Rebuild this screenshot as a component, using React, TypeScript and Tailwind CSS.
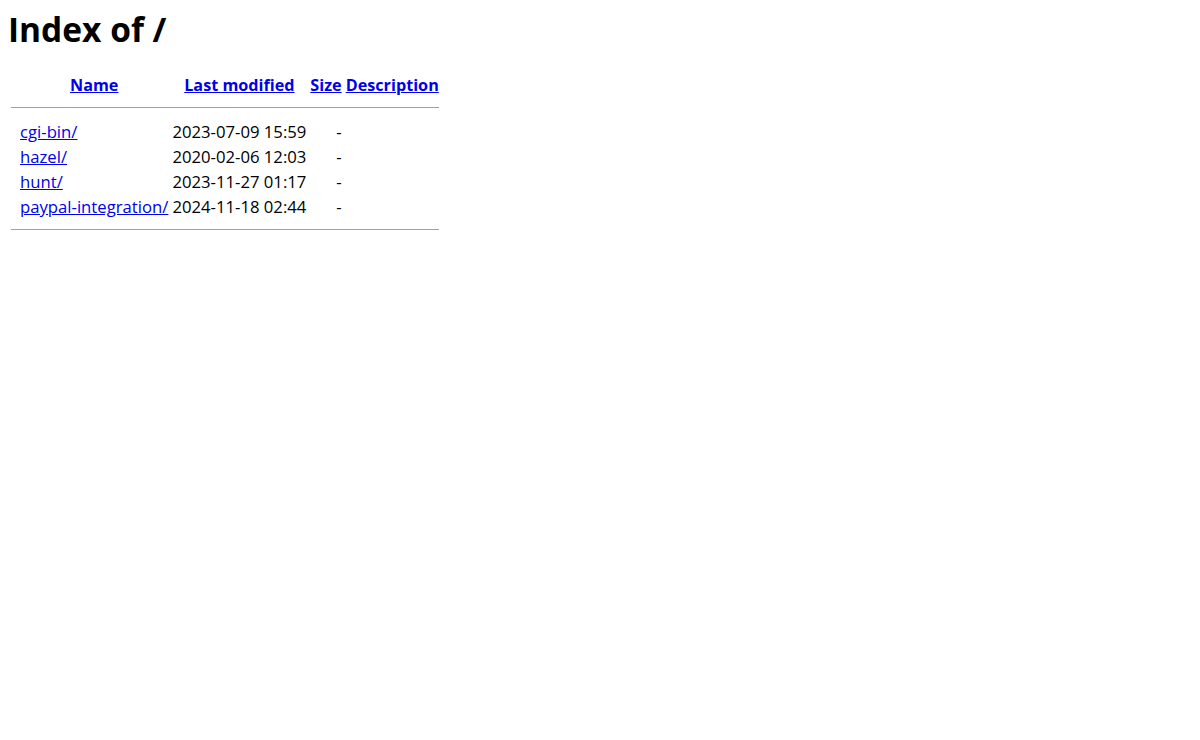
const ROWS = [
  { name: 'cgi-bin/', date: '2023-07-09 15:59' },
  { name: 'hazel/', date: '2020-02-06 12:03' },
  { name: 'hunt/', date: '2023-11-27 01:17' },
  { name: 'paypal-integration/', date: '2024-11-18 02:44' },
]

export default function App() {
  return (
    <div className="min-h-[740px] bg-white px-2 text-black text-[16.7px] font-['Open_Sans','Noto_Sans',sans-serif]">
      <h1 className="m-0 pt-[8px] pb-[21px] text-[33.5px] font-bold leading-[42px]">Index of /</h1>
      <table className="border-separate border-spacing-[2px] leading-[21px]">
        <tbody>
          <tr className="text-[16.2px]">
            <th className="w-[7px] p-px"></th>
            <th className="px-px pt-[2px] pb-0 text-center">
              <a href="#" className="text-[#0000ee] underline">Name</a>
            </th>
            <th className="px-px pt-[2px] pb-0 text-center">
              <a href="#" className="text-[#0000ee] underline">Last modified</a>
            </th>
            <th className="px-px pt-[2px] pb-0 text-center">
              <a href="#" className="text-[#0000ee] underline">Size</a>
            </th>
            <th className="px-px pt-[2px] pb-0 text-center">
              <a href="#" className="text-[#0000ee] underline">Description</a>
            </th>
          </tr>
          <tr>
            <th colSpan={5} className="p-px">
              <hr className="mt-2 mb-[9px] border-t border-[#a0a0a0]" />
            </th>
          </tr>
          {ROWS.map((r) => (
            <tr key={r.name}>
              <td className="p-px"></td>
              <td className="p-px">
                <a href="#" className="text-[#0000ee] underline">{r.name}</a>
              </td>
              <td className="p-px text-right">{r.date}</td>
              <td className="p-px text-right">-</td>
              <td className="p-px">&nbsp;</td>
            </tr>
          ))}
          <tr>
            <th colSpan={5} className="p-px">
              <hr className="my-2 border-t border-[#a0a0a0]" />
            </th>
          </tr>
        </tbody>
      </table>
    </div>
  )
}
